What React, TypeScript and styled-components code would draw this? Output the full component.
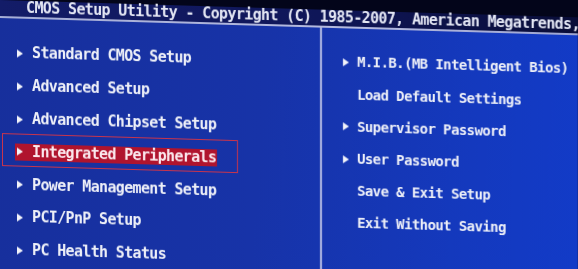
import React from "react";
import styled, { createGlobalStyle } from "styled-components";

const Global = createGlobalStyle`
  html, body {
    margin: 0;
    padding: 0;
    width: 578px;
    height: 269px;
    overflow: hidden;
    background: #03051a;
  }
  #root {
    width: 578px;
    height: 269px;
    overflow: hidden;
  }
`;

const Screen = styled.div`
  width: 578px;
  height: 290px;
  display: flex;
  flex-direction: column;
  transform: skewY(1.72deg);
  transform-origin: 0 0;
  filter: blur(0.3px);
  font-family: "DejaVu Sans Mono", "Liberation Mono", monospace;
  font-weight: 700;
  color: #eef0f8;
`;

const TopBar = styled.div`
  height: 16px;
  padding-left: 26px;
  font-size: 15px;
  letter-spacing: -0.64px;
  line-height: 14px;
  white-space: nowrap;
  color: #e4e7f4;
  background: linear-gradient(90deg, #131c68 0%, #0f1658 55%, #090d38 100%);
`;

const Rule = styled.div`
  height: 2px;
  background: linear-gradient(90deg, #a6aed6, #b4badf 60%, #9ea6d2);
`;

const Body = styled.div`
  flex: 1;
  display: grid;
  grid-template-columns: 320px 1fr;
  background: linear-gradient(95deg, #172f9c 0%, #1733a8 45%, #1439be 80%, #123bc8 100%);
`;

const Column = styled.div<{ $right?: boolean }>`
  display: flex;
  flex-direction: column;
  padding-top: ${(p) => (p.$right ? "17.9px" : "18.6px")};
  padding-left: ${(p) => (p.$right ? "21px" : "0")};
  border-left: ${(p) => (p.$right ? "2px solid #b2bae4" : "none")};
`;

const Row = styled.div<{ $h: number; $selected?: boolean; $right?: boolean }>`
  position: relative;
  box-sizing: border-box;
  height: ${(p) => p.$h}px;
  flex: 0 0 auto;
  display: flex;
  align-items: center;
  padding-left: ${(p) => (p.$right ? "0" : "15px")};

  &::before {
    content: "";
    display: ${(p) => (p.$selected ? "block" : "none")};
    position: absolute;
    left: 2px;
    width: 236px;
    top: -2px;
    bottom: 2px;
    box-sizing: border-box;
    border: 1.5px solid #c8344c;
    pointer-events: none;
  }
`;

const Label = styled.div<{ $selected?: boolean; $right?: boolean }>`
  display: inline-flex;
  align-items: center;
  height: 17px;
  gap: ${(p) => (p.$right ? "8px" : "9px")};
  padding: ${(p) => (p.$right ? "0" : "0 1px 0 2px")};
  background: ${(p) => (p.$selected ? "#b0142e" : "transparent")};
`;

const Arrow = styled.span<{ $hidden?: boolean }>`
  width: 0;
  height: 0;
  flex: 0 0 auto;
  border-left: 6px solid #f2f3fa;
  border-top: 4px solid transparent;
  border-bottom: 4px solid transparent;
  visibility: ${(p) => (p.$hidden ? "hidden" : "visible")};
`;

const Text = styled.span<{ $right?: boolean; $selected?: boolean }>`
  font-size: ${(p) => (p.$right ? "14px" : "15px")};
  letter-spacing: ${(p) => (p.$right ? "-0.6px" : "-0.66px")};
  line-height: 17px;
  white-space: nowrap;
  color: ${(p) => (p.$selected ? "#fbe9ee" : "#eef0f8")};
`;

const leftItems = [
  "Standard CMOS Setup",
  "Advanced Setup",
  "Advanced Chipset Setup",
  "Integrated Peripherals",
  "Power Management Setup",
  "PCI/PnP Setup",
  "PC Health Status",
];

const rightItems: { label: string; arrow: boolean }[] = [
  { label: "M.I.B.(MB Intelligent Bios)", arrow: true },
  { label: "Load Default Settings", arrow: false },
  { label: "Supervisor Password", arrow: true },
  { label: "User Password", arrow: true },
  { label: "Save & Exit Setup", arrow: false },
  { label: "Exit Without Saving", arrow: false },
];

export default function App() {
  const selected = 3;
  return (
    <>
      <Global />
      <Screen>
        <TopBar>CMOS Setup Utility - Copyright (C) 1985-2007, American Megatrends, I</TopBar>
        <Rule />
        <Body>
          <Column>
            {leftItems.map((item, i) => (
              <Row key={item} $h={32.8} $selected={i === selected}>
                <Label $selected={i === selected}>
                  <Arrow />
                  <Text $selected={i === selected}>{item}</Text>
                </Label>
              </Row>
            ))}
          </Column>
          <Column $right>
            {rightItems.map((item) => (
              <Row key={item.label} $h={32.2} $right>
                <Label $right>
                  <Arrow $hidden={!item.arrow} />
                  <Text $right>{item.label}</Text>
                </Label>
              </Row>
            ))}
          </Column>
        </Body>
      </Screen>
    </>
  );
}
